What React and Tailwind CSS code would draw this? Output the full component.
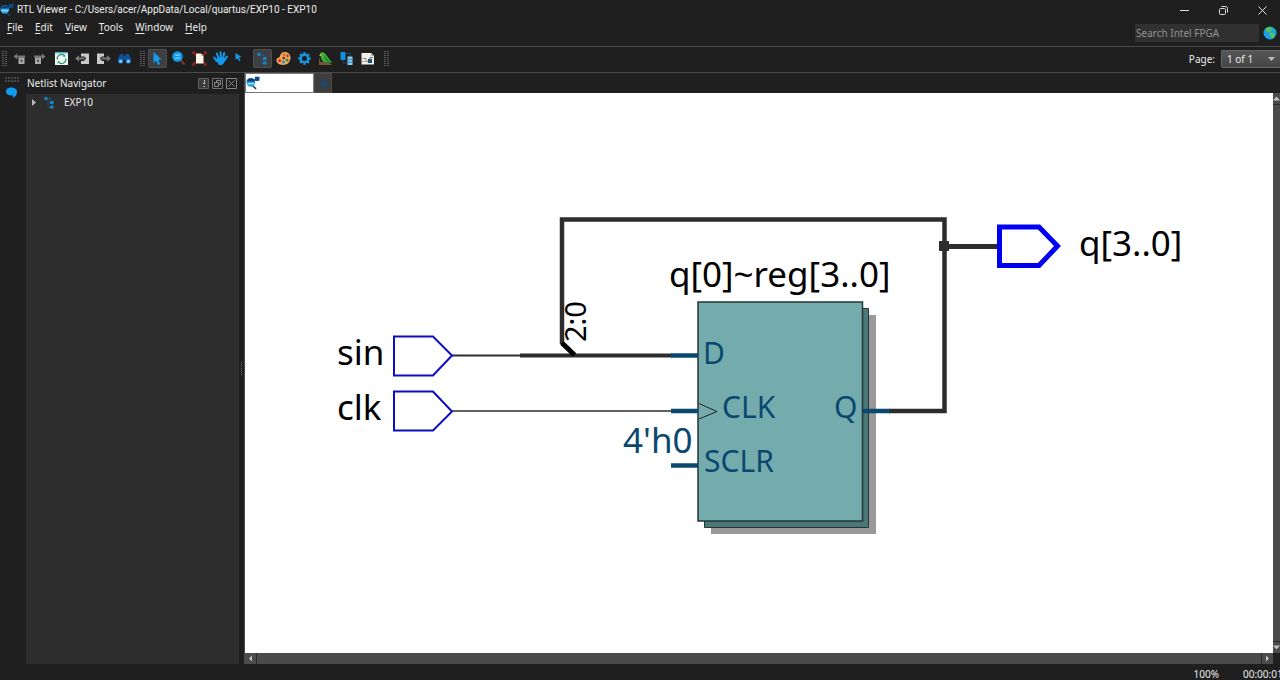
import React from "react";

const Svg = ({ size = 19, children, className = "" }) => (
  <svg
    width={size}
    height={size}
    viewBox={`0 0 ${size} ${size}`}
    className={`block shrink-0 ${className}`}
    aria-hidden="true"
  >
    {children}
  </svg>
);

const ViewerLogo = () => (
  <svg width="14" height="14" viewBox="0 0 14 14" className="block shrink-0" aria-hidden="true">
    <path d="M6.500 9.500 10 13" stroke="#1d3f66" strokeWidth="1.600" />
    <circle cx="4.800" cy="6.400" r="4.400" fill="#2aa3e6" />
    <path d="M.600 5.600a4.300 4.300 0 0 1 8.400 0z" fill="#0d3f70" />
    <path d="M1.500 7.600h6.600" stroke="#a5dcf7" strokeWidth="1.300" />
    <path d="M9 .800h4.500v3.700L11 5.300 9 4.500z" fill="#0d4a86" />
    <path d="M7.500 4.500 10 3.500" stroke="#0d4a86" strokeWidth="1.400" />
  </svg>
);

const BackIcon = () => (
  <Svg>
    <path d="M3.500 7.500 7 4.500v2h8v2H7v2z" fill="#777" />
    <path d="M8.500 8.500h6V15h-6z" fill="#a9a9a9" />
    <path d="M10.500 10.500h2V13h-2z" fill="#555" />
  </Svg>
);

const ForwardIcon = () => (
  <Svg>
    <path d="M14.500 7.500 11 4.500v2H3v2h8v2z" fill="#777" />
    <path d="M4 8.500h6V15H4z" fill="#a9a9a9" />
    <path d="M6 10.500h2V13H6z" fill="#555" />
  </Svg>
);

const RefreshIcon = () => (
  <Svg>
    <path d="M3 3h13v13H3z" fill="#f5f7f6" />
    <path d="M3 3h13v1.500H3z" fill="#5aa9d6" />
    <path d="M5.300 10.500a4.200 4.200 0 0 1 7-3.900M13.700 9.500a4.200 4.200 0 0 1-7 3.900" fill="none" stroke="#1f9a62" strokeWidth="1.300" />
    <path d="M13.300 5.200v2.600h-2.600zM5.700 14.800v-2.600h2.600z" fill="#1f9a62" />
  </Svg>
);

const LeaveIcon = () => (
  <Svg>
    <path d="M8 4.500h8V15H8v-3h3.500V7.500H8z" fill="#c9c9c9" />
    <path d="M2 9.500 6 6.300v2.200h5.500v2H6v2.200z" fill="#777" />
    <path d="M11 8.500h2v2h-2z" fill="#3e3e3e" />
  </Svg>
);

const EnterIcon = () => (
  <Svg>
    <path d="M3 4.500h7v3H7.500V12H10v3H3z" fill="#c9c9c9" />
    <path d="M17 9.500 13 6.300v2.200H7.500v2H13v2.200z" fill="#777" />
    <path d="M6 8.500h2v2H6z" fill="#3e3e3e" />
  </Svg>
);

const BinocularsIcon = () => (
  <Svg>
    <path d="M5 5h3l1 2h1l1-2h3l2 5v4h-5v-3H8v3H3v-4z" fill="#0d4f92" />
    <circle cx="5.700" cy="12" r="2.600" fill="#1674c4" />
    <circle cx="13.300" cy="12" r="2.600" fill="#1674c4" />
    <circle cx="5.700" cy="12.400" r="1.400" fill="#9bd6fa" />
    <circle cx="13.300" cy="12.400" r="1.400" fill="#9bd6fa" />
  </Svg>
);

const PointerIcon = () => (
  <Svg>
    <path d="M5.500 3v11l2.600-2.300 2 4.300 2-1-2-4.100 3.400-.400z" fill="#109bed" />
  </Svg>
);

const ZoomIcon = () => (
  <Svg>
    <path d="m11.500 11 4 4.500" stroke="#93392c" strokeWidth="1.800" />
    <circle cx="8.500" cy="7.500" r="5.300" fill="#129be8" />
    <path d="M6 6.200h5M6 9.200h5" stroke="#8ed2f7" strokeWidth="1.200" />
  </Svg>
);

const FitIcon = () => (
  <Svg>
    <path d="M3 3l4 4M16 3l-4 4M3 16l4-4M16 16l-4-4" stroke="#a3261e" strokeWidth="1.400" />
    <path d="M2.500 2.500h3l-3 3zM16.500 2.500v3l-3-3zM2.500 16.500v-3l3 3zM16.500 16.500h-3l3-3z" fill="#b3261e" />
    <path d="M6 4.500h5l2.500 2.500v7.500H6z" fill="#fbf3e4" />
    <path d="M11 4.500V7h2.500z" fill="#c9b99a" />
  </Svg>
);

const HandIcon = () => (
  <Svg>
    <path d="M5.500 12 3.200 8.500M8 10 5.800 4.500M10 9.500 9.500 3.200M12 10l1.200-6M13 12l3-4.500" stroke="#109bed" strokeWidth="2" strokeLinecap="round" />
    <path d="M4.500 10 7.500 8.500h5.500l1.500 1.800-2 4.200-1.500 1.500H8z" fill="#109bed" />
  </Svg>
);

const SmallPointerIcon = () => (
  <Svg>
    <path d="M3.500 4v7l2-1.700 1.700 2.900 1.400-.800-1.700-2.800 2.600-.500z" fill="#109bed" />
  </Svg>
);

const TreeIcon = () => (
  <Svg>
    <path d="M8 6.500v8h3M8 9.500h3" fill="none" stroke="#2f5a72" strokeWidth="1" strokeDasharray="1 1" />
    <path d="M4.500 4h3v3h-3zM10 8h3.500v3H10zM10 12.500h3.500v3H10z" fill="#1188c9" />
    <path d="M9 5h2v1.500H9z" fill="#0d6596" />
  </Svg>
);

const PaletteIcon = () => (
  <Svg>
    <path d="M10.500 3c4 0 6.300 2.500 6 6.300C16.200 13.600 13 16 9 16c-4.300 0-7-2.500-6.500-5.400C2.800 8.800 4.500 9.200 5.500 8c.900-1 .700-2 1.500-3.200C7.700 3.600 9 3 10.500 3z" fill="#f4a95a" />
    <circle cx="10" cy="5.500" r="1.300" fill="#e8532f" />
    <circle cx="13.500" cy="6.800" r="1.400" fill="#b03a2a" />
    <circle cx="13.200" cy="11" r="1.600" fill="#2f8a3c" />
    <circle cx="9.500" cy="13" r="1.600" fill="#2f8fd0" />
    <circle cx="5.600" cy="11.600" r="1.600" fill="#e02f25" />
    <circle cx="9.700" cy="9" r="1.200" fill="#2a2320" />
  </Svg>
);

const GearIcon = () => (
  <Svg>
    <path d="M9.500 3.300v12.400M3.300 9.500h12.400M5.100 5.100l8.800 8.800M13.900 5.100l-8.800 8.800" stroke="#1794db" strokeWidth="2.400" />
    <circle cx="9.500" cy="9.500" r="3.700" fill="#1f1f1f" stroke="#1794db" strokeWidth="2.400" />
    <circle cx="9.500" cy="9.500" r="2" fill="#1d2226" />
  </Svg>
);

const BirdIcon = () => (
  <Svg>
    <path d="M3 8v8h13.500l-4-2.500L4.500 13z" fill="#76563f" />
    <path d="M4 5.500C4 3.500 6 2.700 7.500 3.500c2 1 2.500 2.500 4 4.300l4.500 6-4.500-.300C8 14 5.500 12 5 8.500z" fill="#3fae35" />
    <path d="m8 6.500 6 6.500c-3.500.300-5.800-2.500-6-6.500z" fill="#23802c" />
    <path d="M3 6.500 5 4.800l.500 2.500z" fill="#d9c33d" />
  </Svg>
);

const PortsIcon = () => (
  <Svg>
    <path d="M3.500 3h5v8h-5z" fill="#0f8fdc" />
    <path d="M8.500 4.500h5V7M6 11v3h4" fill="none" stroke="#27495c" strokeWidth="1" />
    <path d="M10.500 7.500h5V16h-5z" fill="#86cdf2" />
    <path d="M10.500 10.300h5M10.500 13.200h5" stroke="#2c86bd" strokeWidth="1" />
  </Svg>
);

const ExportIcon = () => (
  <Svg>
    <path d="M3.500 4h9.500l3 3v8.500H3.500z" fill="#f2eee4" />
    <path d="M13 4v3h3z" fill="#b9b3a4" />
    <path d="M4.500 9.500H8v3h2.500M4.500 12.500h2" fill="none" stroke="#7c8b93" strokeWidth="1" />
    <path d="M10 10h4v4h-4z" fill="#17517f" />
    <path d="M12 10V8.500h3" fill="none" stroke="#5d7480" strokeWidth="1" />
  </Svg>
);

const historyTools = [
  ["Back", BackIcon],
  ["Forward", ForwardIcon],
  ["Refresh", RefreshIcon],
  ["Go up", LeaveIcon],
  ["Go down", EnterIcon],
  ["Find", BinocularsIcon],
];

const viewTools = [
  ["Selection tool", PointerIcon, true],
  ["Zoom tool", ZoomIcon],
  ["Fit in window", FitIcon],
  ["Hand tool", HandIcon],
  ["Area selection", SmallPointerIcon],
  ["Netlist Navigator", TreeIcon, true],
  ["Color settings", PaletteIcon],
  ["Settings", GearIcon],
  ["Bird's eye view", BirdIcon],
  ["Show ports", PortsIcon],
  ["Export", ExportIcon],
];

const ToolGroup = ({ tools }) => (
  <div className="flex">
    {tools.map(([label, Icon, active]) => (
      <button
        key={label}
        type="button"
        aria-label={label}
        className={`mx-px flex size-[19px] items-center justify-center rounded-[2px] ${
          active ? "bg-[#3c3e40] outline outline-1 -outline-offset-1 outline-[#4e4e4e]" : ""
        }`}
      >
        <Icon />
      </button>
    ))}
  </div>
);

const Grip = () => (
  <svg width="5" height="15" viewBox="0 0 5 15" className="block shrink-0" aria-hidden="true">
    <path d="M1 0v15M4 0v15" stroke="#6b6b6b" strokeWidth="1.500" strokeDasharray="1 1" />
  </svg>
);

const menus = ["File", "Edit", "View", "Tools", "Window", "Help"];

const wire = "#2d2d2d";
const pin = "#0b4870";

const Schematic = () => (
  <svg
    viewBox="245 93 1028 560"
    className="block h-full w-full font-['Noto_Sans',sans-serif]"
    role="img"
    aria-label="RTL schematic"
  >
    <g fill="none" stroke={wire}>
      <path d="M452 355.500h70" strokeWidth="2" />
      <path d="M520 355.500h152" strokeWidth="4" />
      <path d="M452 411h220" strokeWidth="1.500" />
      <path d="M562 344V219.500h382.500V411H889" strokeWidth="4.500" />
      <path d="M944 246.500h54" strokeWidth="5" />
    </g>
    <path d="M939 241h10v10h-10z" fill={wire} />
    <path d="m562 343 12.500 12" stroke="#000" strokeWidth="5" />

    <g fill="none" stroke="#0c0cc0" strokeWidth="2">
      <path d="M394 336.500h39l19 19-19 20h-39z" />
      <path d="M394 391.500h39l19 20-19 19h-39z" />
    </g>
    <path d="M999.500 227H1039l18.500 19-18.500 19.500h-39.500z" fill="none" stroke="#0000f0" strokeWidth="5" />

    <path d="M711 315h165v219H711z" fill="#999" />
    <path d="M704.500 308.500h164v219h-164z" fill="#4b7779" stroke="#263536" />
    <path d="M698 302h164.500v219H698z" fill="#74acad" stroke="#263536" strokeWidth="1.500" />
    <path d="m699 403.500 18 8-18 7.500" fill="none" stroke="#222" strokeWidth="1" />

    <path d="M671 355.500h27M671 411h27M671 465.500h27M863 411h27" stroke={pin} strokeWidth="4.500" />

    <g fontSize="35">
      <text x="337" y="365">sin</text>
      <text x="337" y="420">clk</text>
      <text x="1079" y="256">q[3..0]</text>
      <text x="669" y="287">q[0]~reg[3..0]</text>
      <text x="623" y="453" fill={pin}>4'h0</text>
    </g>
    <text transform="translate(586 342) rotate(-90)" fontSize="29">2:0</text>
    <g fill={pin} fontSize="30">
      <text x="703" y="364">D</text>
      <text x="722" y="418">CLK</text>
      <text x="834" y="418">Q</text>
      <text x="704" y="472">SCLR</text>
    </g>
  </svg>
);

const PanelButton = ({ label, children }) => (
  <button type="button" aria-label={label} className="flex size-[11px] items-center justify-center">
    <Svg size={11}>{children}</Svg>
  </button>
);

export default function App() {
  return (
    <div className="flex h-screen flex-col overflow-hidden bg-[#1f1f1f] font-['Noto_Sans',sans-serif] text-[10px] leading-4 text-[#ececec]">
      <div className="flex items-start">
        <div className="min-w-0 flex-1">
          <header className="flex h-[19px] items-center gap-[3px]">
            <ViewerLogo />
            <h1 className="truncate font-['Roboto',sans-serif] text-[10px]">RTL Viewer - C:/Users/acer/AppData/Local/quartus/EXP10 - EXP10</h1>
          </header>
          <nav className="flex h-[27px] items-start gap-3 pl-[7px]">
            {menus.map((m) => (
              <button key={m} type="button">
                <span className="underline underline-offset-2">{m[0]}</span>
                {m.slice(1)}
              </button>
            ))}
          </nav>
        </div>
        <div className="flex flex-col items-end">
          <div className="flex h-5 items-center gap-7 pr-3">
            <button type="button" aria-label="Minimize">
              <Svg size={11}><path d="M1 5.500h9" stroke="#ddd" /></Svg>
            </button>
            <button type="button" aria-label="Restore">
              <Svg size={11}>
                <rect x="1.500" y="3.500" width="6" height="6" rx="1" fill="none" stroke="#ddd" />
                <path d="M3.500 1.500h4a2 2 0 0 1 2 2v4" fill="none" stroke="#ddd" />
              </Svg>
            </button>
            <button type="button" aria-label="Close">
              <Svg size={11}><path d="m1.500 1.500 8 8m0-8-8 8" stroke="#e4e4e4" /></Svg>
            </button>
          </div>
          <div className="flex items-center gap-1 pt-1 pr-[3px]">
            <input
              type="search"
              aria-label="Search Intel FPGA"
              placeholder="Search Intel FPGA"
              className="h-[18px] w-[124px] bg-[#303030] px-px text-[10px] text-white placeholder:text-[#929292]"
            />
            <button type="button" aria-label="Open website">
              <Svg size={14}>
                <circle cx="7" cy="7" r="6.500" fill="#18a0e8" />
                <path d="M2.500 2.500C4 1.200 7 .800 8.500 1.500l.500 2L7.300 5l-.500 1.500L4.500 6 3 4.500zM7 6.500l3 .500 2 1.700-1 2.300-2 2-1-2.500-1.500-2zM10.500 3l2 1.500L11 5.500z" fill="#5ac44e" />
              </Svg>
            </button>
          </div>
        </div>
      </div>

      <div className="flex h-[27px] shrink-0 items-center border-y border-[#4a4a4a] pb-[2px]">
        <div className="flex items-center gap-[2px] pl-[2px]">
          <Grip />
          <ToolGroup tools={historyTools} />
        </div>
        <div className="flex items-center gap-[2px] pl-[5px]">
          <Grip />
          <ToolGroup tools={viewTools} />
        </div>
        <div className="pl-[6px]"><Grip /></div>
        <div className="ml-auto flex items-center gap-[6px]">
          <label htmlFor="page">Page:</label>
          <div className="relative">
            <select
              id="page"
              className="block h-[18px] w-[59px] appearance-none rounded-l-[2px] border border-r-0 border-[#666] bg-linear-to-b from-[#565656] to-[#454545] pl-[5px] text-[10px] leading-4"
            >
              <option>1 of 1</option>
            </select>
            <svg width="7" height="4" viewBox="0 0 7 4" className="pointer-events-none absolute top-[7px] right-[5px]" aria-hidden="true">
              <path d="M0 0h7L3.500 4z" fill="#bdbdbd" />
            </svg>
          </div>
        </div>
      </div>

      <div className="flex min-h-0 flex-1">
        <aside className="flex w-[26px] shrink-0 flex-col items-start gap-1 pt-1 pl-[5px]">
          <svg width="15" height="5" viewBox="0 0 15 5" aria-hidden="true">
            <path d="M0 1h15M0 4h15" stroke="#707070" strokeDasharray="2 1" />
          </svg>
          <button type="button" aria-label="Messages">
            <Svg size={13}>
              <path d="M1 5.500C1 2.800 3.300 1.500 6.500 1.500S12 3 12 6c0 3.200-2 5.500-5 6 1-.800 1.300-1.500 1.200-2.500C4 10 1 8.700 1 5.500z" fill="#0c9cf0" />
            </Svg>
          </button>
        </aside>

        <section className="flex w-[213px] shrink-0 flex-col">
          <div className="flex h-[21px] items-center pb-px pl-px">
            <h2 className="flex-1">Netlist Navigator</h2>
            <div className="flex gap-[3px] pr-[2px]">
              <PanelButton label="Pin panel">
                <path d="M.500.500h10v10H.500z" fill="#3b3b3b" stroke="#5d5d5d" />
                <path d="M6.500 2v4M5 5.500h2M5.500 8.500h1.500" stroke="#bdbdbd" />
              </PanelButton>
              <PanelButton label="Float panel">
                <path d="M.500.500h10v10H.500z" fill="none" stroke="#6e6e6e" />
                <path d="M4.500 4V2.500h4v4H7M2.500 4.500h4v4h-4z" fill="none" stroke="#8d8d8d" />
              </PanelButton>
              <PanelButton label="Close panel">
                <path d="M.500.500h10v10H.500zM2.500 2.500l6 6m0-6-6 6" fill="none" stroke="#858585" />
              </PanelButton>
            </div>
          </div>
          <div className="flex-1 bg-[#2d2d2d]">
            <button type="button" aria-expanded="false" className="flex h-4 w-full items-center pl-[6px]">
              <svg width="4" height="7" viewBox="0 0 4 7" aria-hidden="true"><path d="M0 0v7l4-3.500z" fill="#b5b5b5" /></svg>
              <span className="pr-[5px] pl-1"><TreeIcon /></span>
              <span>EXP10</span>
            </button>
          </div>
        </section>

        <div className="flex w-[5px] shrink-0 items-center justify-center">
          <svg width="3" height="14" viewBox="0 0 3 14" aria-hidden="true">
            <path d="M1.500 0v14" stroke="#666" strokeDasharray="1 1" />
          </svg>
        </div>

        <main className="flex min-w-0 flex-1 flex-col border-l border-[#4a4a4a]">
          <div className="flex h-5 shrink-0 items-stretch">
            <button type="button" aria-label="Schematic view" className="flex w-[69px] items-center border border-[#777] bg-white">
              <ViewerLogo />
            </button>
            <button type="button" aria-label="New tab" className="flex w-[18px] items-center justify-center border border-[#484848] bg-[#3d3d3d]">
              <Svg size={9}><path d="M4.500 0v9M0 4.500h9" stroke="#164a7c" strokeWidth="2" /></Svg>
            </button>
          </div>
          <div className="flex min-h-0 flex-1">
            <div className="min-w-0 flex-1 bg-white"><Schematic /></div>
            <div className="flex w-[7px] shrink-0 flex-col justify-between overflow-hidden bg-[#4b4b4b]">
              <button type="button" aria-label="Scroll up" className="flex h-3 items-center justify-center border-b border-[#2b2b2b]">
                <Svg size={7}><path d="M0 5.500h7L3.500 1.500z" fill="#c4c4c4" /></Svg>
              </button>
              <button type="button" aria-label="Scroll down" className="flex h-3 items-center justify-center border-t border-[#2b2b2b]">
                <Svg size={7}><path d="M0 1.500h7L3.500 5.500z" fill="#c4c4c4" /></Svg>
              </button>
            </div>
          </div>
          <div className="flex h-[11px] shrink-0 pr-[7px]">
            <div className="flex flex-1 justify-between bg-[#4b4b4b]">
              <button type="button" aria-label="Scroll left" className="flex w-3 items-center justify-center border-r border-[#2b2b2b]">
                <Svg size={7}><path d="M5 .500v6L2 3.500z" fill="#c4c4c4" /></Svg>
              </button>
              <button type="button" aria-label="Scroll right" className="flex w-3 items-center justify-center border-l border-[#2b2b2b]">
                <Svg size={7}><path d="M2 .500v6l3-3z" fill="#c4c4c4" /></Svg>
              </button>
            </div>
          </div>
        </main>
      </div>

      <footer className="flex h-4 shrink-0 items-center justify-end gap-6 pt-1 text-[10px]">
        <span>100%</span>
        <span className="w-[37px] overflow-hidden whitespace-nowrap">00:00:01</span>
      </footer>
    </div>
  );
}
